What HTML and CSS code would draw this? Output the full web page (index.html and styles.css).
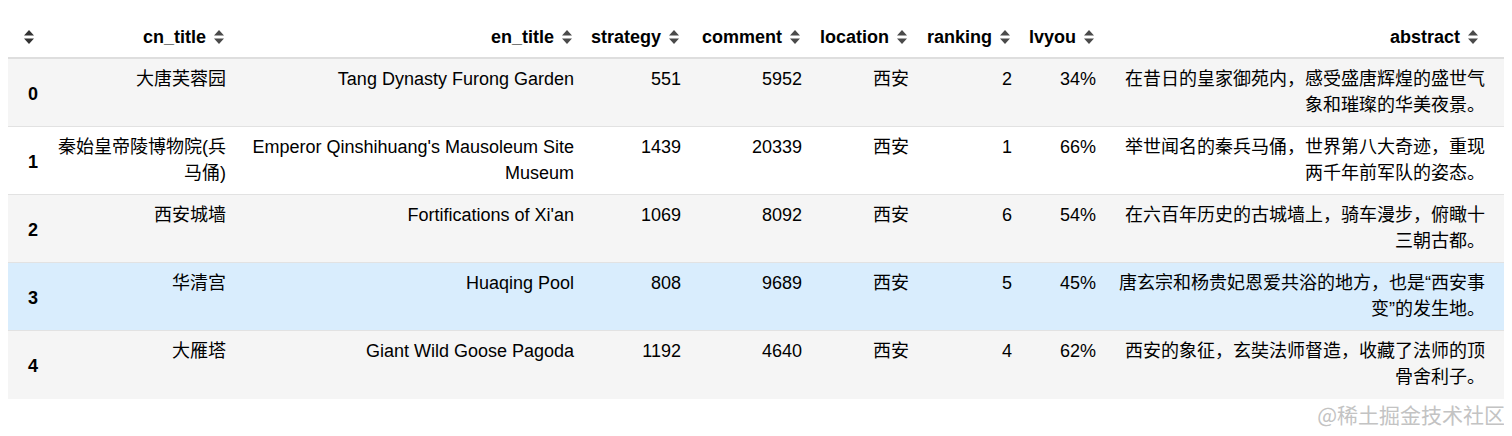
FILE: index.html
```html
<!DOCTYPE html>
<html lang="zh">
<head>
<meta charset="utf-8">
<title>DataFrame</title>
<link rel="stylesheet" href="styles.css">
</head>
<body>
<table class="df">
  <thead>
    <tr>
      <th class="c-idx"><svg class="sort" viewBox="0 0 10 14"><path d="M5 0 L10 5.6 L0 5.6 Z M0 8.4 L10 8.4 L5 14 Z"/></svg></th>
      <th class="c-cn">cn_title<svg class="sort" viewBox="0 0 10 14"><path d="M5 0 L10 5.6 L0 5.6 Z M0 8.4 L10 8.4 L5 14 Z"/></svg></th>
      <th class="c-en">en_title<svg class="sort" viewBox="0 0 10 14"><path d="M5 0 L10 5.6 L0 5.6 Z M0 8.4 L10 8.4 L5 14 Z"/></svg></th>
      <th class="c-strategy">strategy<svg class="sort" viewBox="0 0 10 14"><path d="M5 0 L10 5.6 L0 5.6 Z M0 8.4 L10 8.4 L5 14 Z"/></svg></th>
      <th class="c-comment">comment<svg class="sort" viewBox="0 0 10 14"><path d="M5 0 L10 5.6 L0 5.6 Z M0 8.4 L10 8.4 L5 14 Z"/></svg></th>
      <th class="c-location">location<svg class="sort" viewBox="0 0 10 14"><path d="M5 0 L10 5.6 L0 5.6 Z M0 8.4 L10 8.4 L5 14 Z"/></svg></th>
      <th class="c-ranking">ranking<svg class="sort" viewBox="0 0 10 14"><path d="M5 0 L10 5.6 L0 5.6 Z M0 8.4 L10 8.4 L5 14 Z"/></svg></th>
      <th class="c-lvyou">lvyou<svg class="sort" viewBox="0 0 10 14"><path d="M5 0 L10 5.6 L0 5.6 Z M0 8.4 L10 8.4 L5 14 Z"/></svg></th>
      <th class="c-abstract">abstract<svg class="sort" viewBox="0 0 10 14"><path d="M5 0 L10 5.6 L0 5.6 Z M0 8.4 L10 8.4 L5 14 Z"/></svg></th>
    </tr>
  </thead>
  <tbody>
    <tr class="even">
      <th class="idx">0</th>
      <td class="cn">大唐芙蓉园</td>
      <td>Tang Dynasty Furong Garden</td>
      <td>551</td>
      <td>5952</td>
      <td>西安</td>
      <td>2</td>
      <td>34%</td>
      <td class="abs">在昔日的皇家御苑内，感受盛唐辉煌的盛世气象和璀璨的华美夜景。</td>
    </tr>
    <tr>
      <th class="idx">1</th>
      <td class="cn">秦始皇帝陵博物院(兵马俑)</td>
      <td>Emperor Qinshihuang's Mausoleum Site Museum</td>
      <td>1439</td>
      <td>20339</td>
      <td>西安</td>
      <td>1</td>
      <td>66%</td>
      <td class="abs">举世闻名的秦兵马俑，世界第八大奇迹，重现两千年前军队的姿态。</td>
    </tr>
    <tr class="even">
      <th class="idx">2</th>
      <td class="cn">西安城墙</td>
      <td>Fortifications of Xi'an</td>
      <td>1069</td>
      <td>8092</td>
      <td>西安</td>
      <td>6</td>
      <td>54%</td>
      <td class="abs">在六百年历史的古城墙上，骑车漫步，俯瞰十三朝古都。</td>
    </tr>
    <tr class="hover">
      <th class="idx">3</th>
      <td class="cn">华清宫</td>
      <td>Huaqing Pool</td>
      <td>808</td>
      <td>9689</td>
      <td>西安</td>
      <td>5</td>
      <td>45%</td>
      <td class="abs">唐玄宗和杨贵妃恩爱共浴的地方，也是“西安事变”的发生地。</td>
    </tr>
    <tr class="even last">
      <th class="idx">4</th>
      <td class="cn">大雁塔</td>
      <td>Giant Wild Goose Pagoda</td>
      <td>1192</td>
      <td>4640</td>
      <td>西安</td>
      <td>4</td>
      <td>62%</td>
      <td class="abs">西安的象征，玄奘法师督造，收藏了法师的顶骨舍利子。</td>
    </tr>
  </tbody>
</table>
<div class="wm">@稀土掘金技术社区</div>
</body>
</html>
```

FILE: styles.css
```css
html, body {
  background: #ffffff;
}
body {
  margin: 8px;
  font-family: "Liberation Sans", "Noto Sans CJK SC", sans-serif;
  font-size: 18px;
  color: #000000;
}
.df {
  table-layout: fixed;
  width: 1496px;
  border-collapse: separate;
  border-spacing: 0;
}
.df th,
.df td {
  box-sizing: border-box;
}
.df thead th {
  font-weight: bold;
  text-align: right;
  vertical-align: bottom;
  white-space: nowrap;
  line-height: 22px;
  padding: 18px 12px 9px 2px;
  border-bottom: 2px solid #dedede;
  background: #ffffff;
}
.sort {
  display: inline-block;
  width: 10px;
  height: 14px;
  margin-left: 8px;
  vertical-align: -1px;
  fill: #4a4a4a;
}
.df thead th.c-idx {
  text-align: left;
  padding-left: 16px;
}
.df thead th.c-idx .sort {
  margin-left: 0;
  fill: #333333;
}
.c-idx { width: 42px; }
.c-cn { width: 186px; }
.c-en { width: 348px; }
.c-strategy { width: 107px; }
.c-comment { width: 121px; }
.c-location { width: 107px; }
.c-ranking { width: 103px; }
.c-lvyou { width: 84px; }
.c-abstract { width: 398px; }
.df thead th.c-abstract {
  padding-right: 26px;
}
.df tbody td {
  text-align: right;
  vertical-align: top;
  line-height: 26px;
  padding: 7px 10px 8px 10px;
  border-bottom: 1px solid #e2e2e2;
}
.df tbody th.idx {
  text-align: left;
  vertical-align: middle;
  font-weight: bold;
  line-height: 26px;
  padding: 2px 4px 0 20px;
  border-bottom: 1px solid #e2e2e2;
}
.df tbody td.cn {
  padding-left: 4px;
}
.df tbody td.abs {
  padding-left: 7px;
  padding-right: 19px;
}
.df tbody tr.even td,
.df tbody tr.even th {
  background: #f5f5f5;
}
.df tbody tr.hover td,
.df tbody tr.hover th {
  background: #d9edfd;
}
.df tbody tr.last td,
.df tbody tr.last th {
  border-bottom-color: #f5f5f5;
}
.wm {
  width: 1497px;
  margin-top: 2px;
  text-align: right;
  font-family: "Noto Sans CJK SC", sans-serif;
  font-size: 21px;
  line-height: 26px;
  color: #c3c3c3;
}
```
